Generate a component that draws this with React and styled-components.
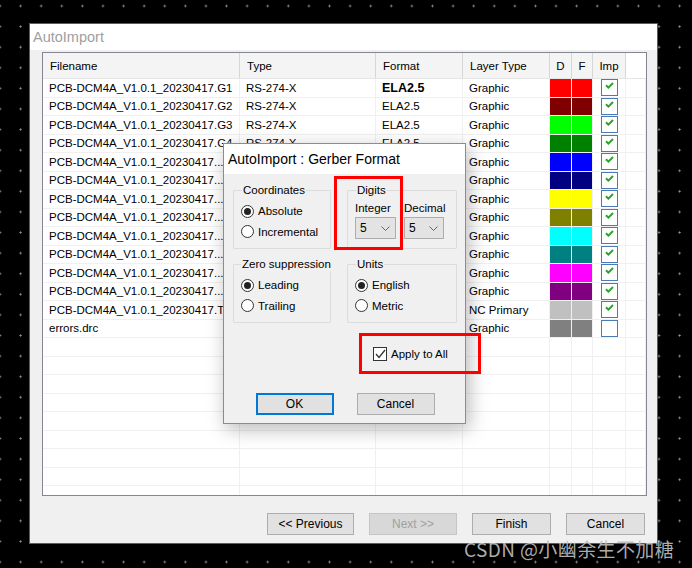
import React from 'react';
import styled, { createGlobalStyle } from 'styled-components';

const GlobalStyle = createGlobalStyle`
  html, body { margin: 0; padding: 0; }
  body {
    width: 692px;
    height: 568px;
    overflow: hidden;
    background-color: #000;
    background-image: radial-gradient(circle, #9a9a9a 0.8px, transparent 1.3px);
    background-size: 20.6px 20.6px;
    background-position: 10.3px -4.3px;
    font-family: "Liberation Sans", Arial, sans-serif;
    font-size: 11.5px;
    color: #000;
  }
`;

const Stage = styled.div`
  position: relative;
  width: 692px;
  height: 568px;
  padding: 23px 0 0 29px;
  box-sizing: border-box;
`;

const Window = styled.div`
  width: 629px;
  height: 521px;
  box-sizing: border-box;
  border: 1px solid #5d5d5d;
  background: #f0f0f0;
  display: flex;
  flex-direction: column;
`;

const WindowTitle = styled.div`
  height: 26px;
  background: #fff;
  color: #a0a0a0;
  font-size: 14.5px;
  padding-left: 3px;
  display: flex;
  align-items: center;
`;

const WindowBody = styled.div`
  padding: 2px 10px 0 12px;
  display: flex;
  flex-direction: column;
`;

const ListFrame = styled.div`
  height: 444px;
  box-sizing: border-box;
  border: 1px solid #828790;
  background: #fff;
  overflow: hidden;
`;

const COLS = '197px 136px 87px 87px 22px 21px 33px 1fr';

const HeaderRow = styled.div`
  display: grid;
  grid-template-columns: ${COLS};
  height: 26px;
  box-sizing: border-box;
  background: #f4f4f4;
  border-bottom: 1px solid #e5e5e5;
`;

const HeaderCell = styled.div`
  display: flex;
  align-items: center;
  justify-content: ${p => (p.$center ? 'center' : 'flex-start')};
  padding-left: ${p => (p.$center ? 0 : 7)}px;
  border-right: ${p => (p.$last ? 'none' : '1px solid #d6d6d6')};
  background: ${p => (p.$last ? '#fff' : 'transparent')};
`;

const Row = styled.div`
  display: grid;
  grid-template-columns: ${COLS};
  height: 18.5px;
  box-sizing: border-box;
  border-bottom: 1px solid #f0f0f0;
`;

const Cell = styled.div`
  display: flex;
  align-items: center;
  justify-content: ${p => (p.$center ? 'center' : 'flex-start')};
  padding-left: ${p => (p.$center ? 0 : 6)}px;
  border-right: 1px solid #f0f0f0;
  white-space: nowrap;
  overflow: hidden;
  font-weight: ${p => (p.$bold ? 700 : 400)};
  font-size: ${p => (p.$bold ? '12.5px' : '11.5px')};
  background: ${p => p.$swatch || 'transparent'};
`;

const ImpBox = styled.span`
  width: 17px;
  height: 17px;
  box-sizing: border-box;
  border: 1.5px solid #4a7bb6;
  background: #fff;
  display: flex;
  justify-content: center;
  padding-top: 2px;
`;

const ButtonRow = styled.div`
  margin-top: 17px;
  margin-right: 2px;
  display: flex;
  justify-content: flex-end;
  gap: 15px;
`;

const WinButton = styled.div`
  width: ${p => p.$w}px;
  height: 22px;
  box-sizing: border-box;
  border: 1px solid ${p => (p.$disabled ? '#c6c6c6' : '#adadad')};
  background: ${p => (p.$disabled ? '#d8d8d8' : '#e1e1e1')};
  color: ${p => (p.$disabled ? '#a0a0a0' : '#000')};
  display: flex;
  align-items: center;
  justify-content: center;
  font-size: 12px;
`;

/* ---- modal dialog ---- */

const Dialog = styled.div`
  position: absolute;
  left: 223px;
  top: 143px;
  width: 243px;
  box-sizing: border-box;
  border: 1px solid #8c8c8c;
  background: #f0f0f0;
  box-shadow: 3px 5px 18px rgba(0, 0, 0, 0.28);
`;

const DialogTitle = styled.div`
  height: 30px;
  background: #fff;
  font-size: 14px;
  padding-left: 4px;
  display: flex;
  align-items: center;
`;

const DialogBody = styled.div`
  padding: 9px 8px 8px 9px;
  display: flex;
  flex-direction: column;
`;

const GroupGrid = styled.div`
  display: grid;
  grid-template-columns: 98px 110px;
  column-gap: 16px;
  row-gap: 8px;
`;

const Group = styled.fieldset`
  margin: 0;
  height: 66px;
  box-sizing: border-box;
  border: 1px solid #dcdcdc;
  border-radius: 1px;
  padding: 4px 0 0 7px;
  min-width: 0;
`;

const Legend = styled.legend`
  padding: 0 1px;
  font-size: 11.5px;
  line-height: 14px;
  white-space: nowrap;
  margin-left: ${p => p.$ml || 0}px;
`;

const RadioRow = styled.label`
  display: flex;
  align-items: center;
  gap: 4px;
  height: 20.5px;
`;

const RadioDot = styled.span`
  width: 13px;
  height: 13px;
  box-sizing: border-box;
  border-radius: 50%;
  border: 1px solid #333;
  background: #fff;
  display: flex;
  align-items: center;
  justify-content: center;
  &::after {
    content: '';
    width: 7px;
    height: 7px;
    border-radius: 50%;
    background: ${p => (p.$on ? '#222' : 'transparent')};
  }
`;

const DigitCols = styled.div`
  display: flex;
  gap: 8px;
`;

const DigitCol = styled.div`
  display: flex;
  flex-direction: column;
  gap: 2px;
`;

const DigitLabel = styled.span`
  line-height: 14px;
`;

const Select = styled.div`
  width: ${p => p.$w}px;
  height: 22px;
  box-sizing: border-box;
  border: 1px solid #adadad;
  background: #e3e3e3;
  display: flex;
  align-items: center;
  justify-content: space-between;
  padding: 0 5px 0 4px;
  font-size: 12px;
`;

const ApplyRow = styled.label`
  margin-top: 24px;
  padding-left: 140px;
  display: flex;
  align-items: center;
  gap: 4px;
  height: 14px;
`;

const CheckSquare = styled.span`
  width: 14px;
  height: 14px;
  box-sizing: border-box;
  border: 1px solid #333;
  background: #fff;
  display: flex;
  align-items: center;
  justify-content: center;
`;

const DialogButtons = styled.div`
  margin-top: 32px;
  display: flex;
  justify-content: center;
  gap: 23px;
`;

const DlgButton = styled.div`
  width: 78px;
  height: 22px;
  box-sizing: border-box;
  border: ${p => (p.$default ? '2px solid #0078d7' : '1px solid #adadad')};
  background: #e1e1e1;
  display: flex;
  align-items: center;
  justify-content: center;
  font-size: 12px;
`;

/* ---- annotations ---- */

const Highlight = styled.div`
  position: absolute;
  box-sizing: border-box;
  border: 3.5px solid #fe0000;
  pointer-events: none;
`;

const Watermark = styled.div`
  position: absolute;
  left: 464px;
  top: 535px;
  font-family: "Noto Sans CJK SC", "Noto Sans", sans-serif;
  font-size: 19px;
  letter-spacing: 0.4px;
  color: rgba(190, 190, 190, 0.92);
  white-space: nowrap;
`;

const Chevron = () => (
  <svg width="9" height="5" viewBox="0 0 9 5">
    <path d="M0.5 0.5 L4.5 4.5 L8.5 0.5" fill="none" stroke="#666" strokeWidth="1" />
  </svg>
);

const GreenCheck = () => (
  <svg width="9" height="7" viewBox="0 0 9 7">
    <path d="M1 3.2 L3.4 5.6 L8 1" fill="none" stroke="#2aa52a" strokeWidth="2" />
  </svg>
);

const DarkCheck = () => (
  <svg width="11" height="10" viewBox="0 0 11 10">
    <path d="M1 5 L4 8.5 L10 1" fill="none" stroke="#333" strokeWidth="1.3" />
  </svg>
);

const BASE = 'PCB-DCM4A_V1.0.1_20230417';
const rows = [
  { name: BASE + '.G1', color: '#ff0000', bold: true },
  { name: BASE + '.G2', color: '#800000' },
  { name: BASE + '.G3', color: '#00ff00' },
  { name: BASE + '.G4', color: '#008000' },
  { name: BASE + '...', color: '#0000ff' },
  { name: BASE + '...', color: '#000080' },
  { name: BASE + '...', color: '#ffff00' },
  { name: BASE + '...', color: '#808000' },
  { name: BASE + '...', color: '#00ffff' },
  { name: BASE + '...', color: '#008080' },
  { name: BASE + '...', color: '#ff00ff' },
  { name: BASE + '...', color: '#800080' },
  { name: BASE + '.TXT', color: '#c0c0c0', layer: 'NC Primary', type: 'Excellon', format: '' },
  { name: 'errors.drc', color: '#808080', imp: false, type: '', format: '' },
];

const EMPTY_ROWS = 10;

export default function App() {
  return (
    <>
      <GlobalStyle />
      <Stage>
        <Window>
          <WindowTitle>AutoImport</WindowTitle>
          <WindowBody>
            <ListFrame>
              <HeaderRow>
                <HeaderCell>Filename</HeaderCell>
                <HeaderCell>Type</HeaderCell>
                <HeaderCell>Format</HeaderCell>
                <HeaderCell>Layer Type</HeaderCell>
                <HeaderCell $center>D</HeaderCell>
                <HeaderCell $center>F</HeaderCell>
                <HeaderCell $center>Imp</HeaderCell>
                <HeaderCell $last />
              </HeaderRow>
              {rows.map((r, i) => (
                <Row key={i}>
                  <Cell>{r.name}</Cell>
                  <Cell>{r.type ?? 'RS-274-X'}</Cell>
                  <Cell $bold={r.bold}>{r.format ?? 'ELA2.5'}</Cell>
                  <Cell>{r.layer || 'Graphic'}</Cell>
                  <Cell $swatch={r.color} />
                  <Cell $swatch={r.color} />
                  <Cell $center>
                    <ImpBox>{r.imp !== false && <GreenCheck />}</ImpBox>
                  </Cell>
                  <Cell />
                </Row>
              ))}
              {Array.from({ length: EMPTY_ROWS }).map((_, i) => (
                <Row key={'e' + i}>
                  <Cell /><Cell /><Cell /><Cell /><Cell /><Cell /><Cell /><Cell />
                </Row>
              ))}
            </ListFrame>
            <ButtonRow>
              <WinButton $w={87}>&lt;&lt; Previous</WinButton>
              <WinButton $w={88} $disabled>Next &gt;&gt;</WinButton>
              <WinButton $w={79}>Finish</WinButton>
              <WinButton $w={79}>Cancel</WinButton>
            </ButtonRow>
          </WindowBody>
        </Window>

        <Dialog>
          <DialogTitle>AutoImport : Gerber Format</DialogTitle>
          <DialogBody>
            <GroupGrid>
              <Group>
                <Legend $ml={1}>Coordinates</Legend>
                <RadioRow><RadioDot $on />Absolute</RadioRow>
                <RadioRow><RadioDot />Incremental</RadioRow>
              </Group>
              <Group>
                <Legend $ml={1}>Digits</Legend>
                <DigitCols>
                  <DigitCol>
                    <DigitLabel>Integer</DigitLabel>
                    <Select $w={41}>5<Chevron /></Select>
                  </DigitCol>
                  <DigitCol>
                    <DigitLabel>Decimal</DigitLabel>
                    <Select $w={40}>5<Chevron /></Select>
                  </DigitCol>
                </DigitCols>
              </Group>
              <Group>
                <Legend>Zero suppression</Legend>
                <RadioRow><RadioDot $on />Leading</RadioRow>
                <RadioRow><RadioDot />Trailing</RadioRow>
              </Group>
              <Group>
                <Legend $ml={1}>Units</Legend>
                <RadioRow><RadioDot $on />English</RadioRow>
                <RadioRow><RadioDot />Metric</RadioRow>
              </Group>
            </GroupGrid>
            <ApplyRow>
              <CheckSquare><DarkCheck /></CheckSquare>
              Apply to All
            </ApplyRow>
            <DialogButtons>
              <DlgButton $default>OK</DlgButton>
              <DlgButton>Cancel</DlgButton>
            </DialogButtons>
          </DialogBody>
        </Dialog>

        <Highlight style={{ left: 334, top: 176, width: 69, height: 74 }} />
        <Highlight style={{ left: 359, top: 333, width: 122, height: 41 }} />

        <Watermark>CSDN @小幽余生不加糖</Watermark>
      </Stage>
    </>
  );
}
